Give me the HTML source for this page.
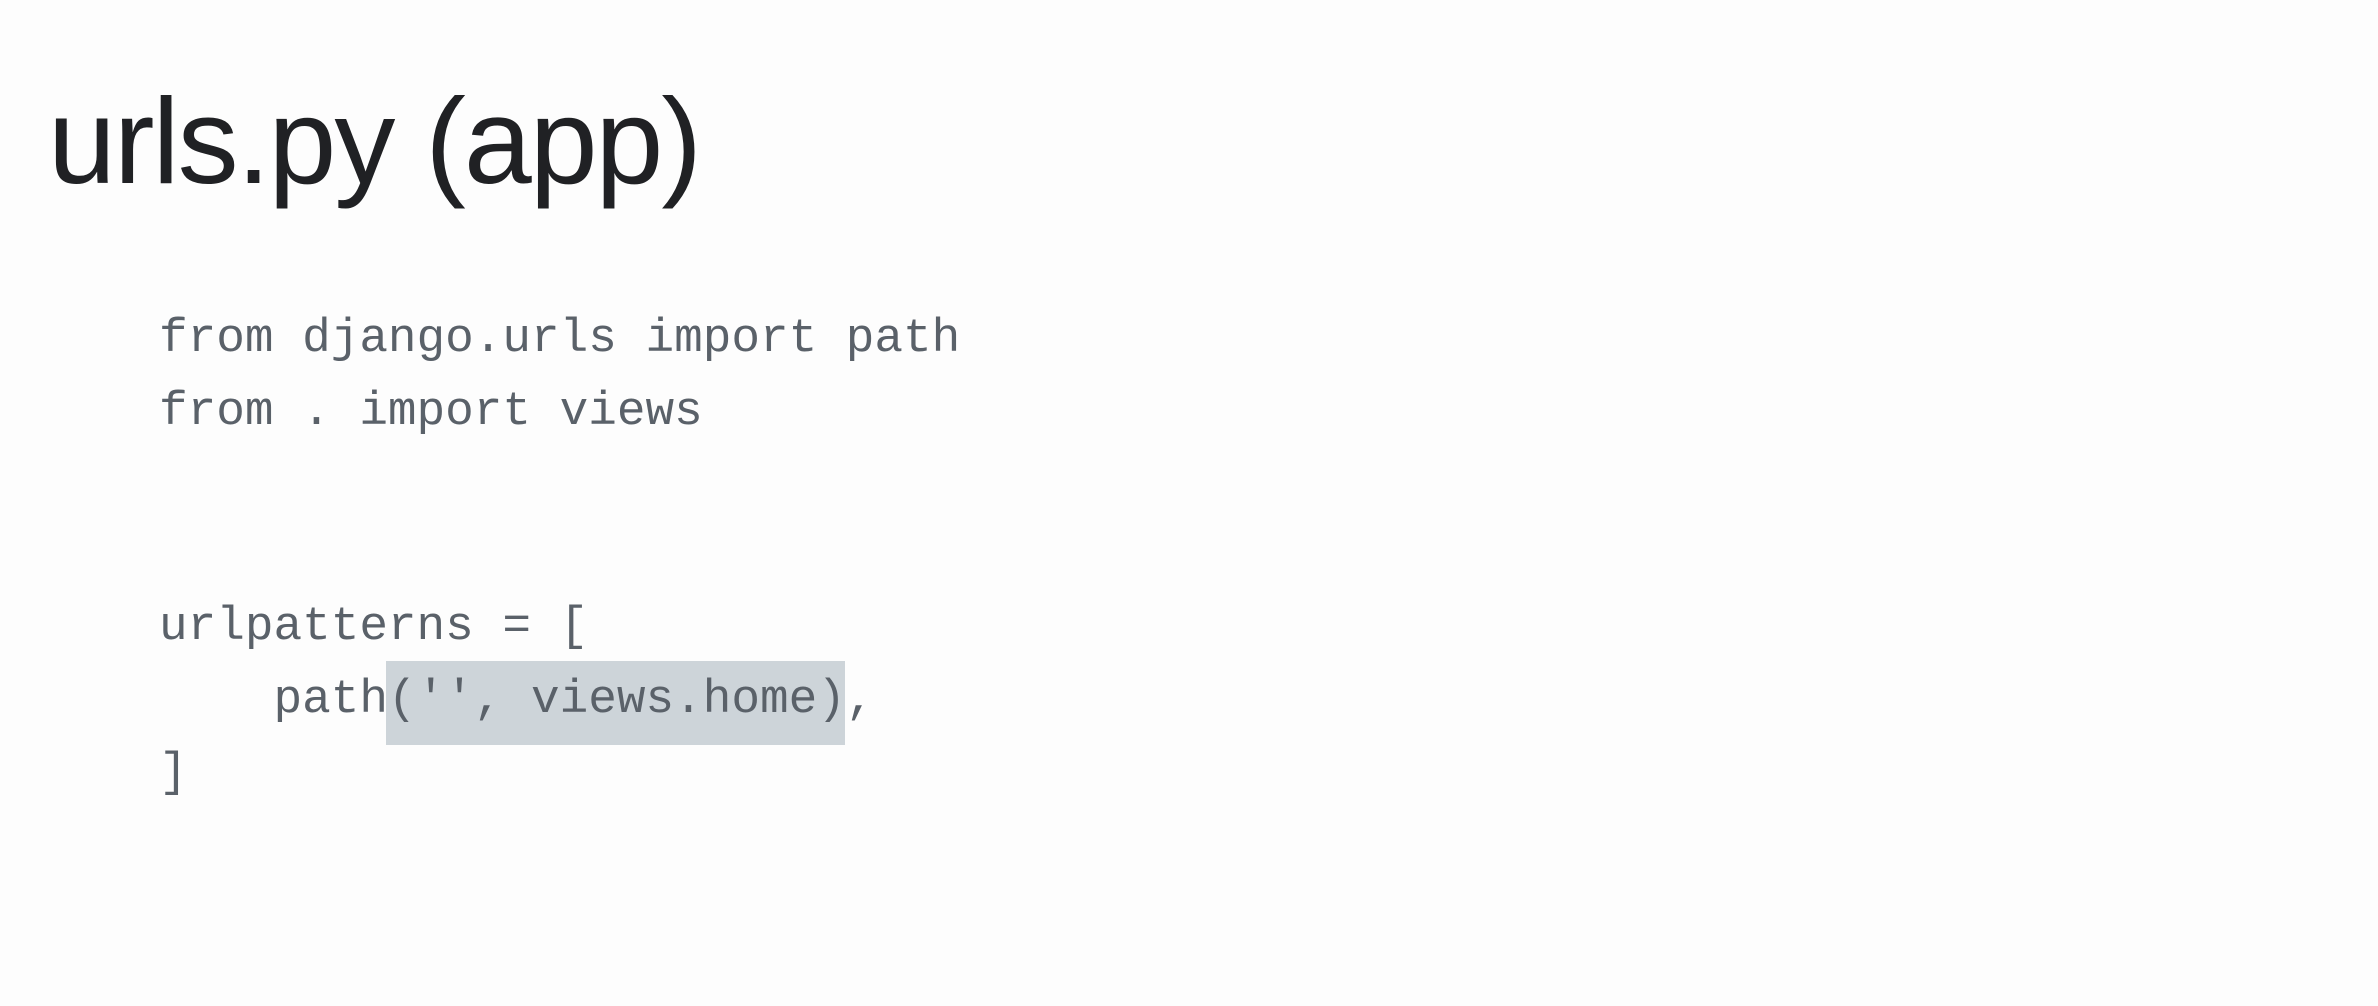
<!DOCTYPE html>
<html><head><meta charset="utf-8"><style>
html,body{margin:0;padding:0;width:2378px;height:1006px;background:#fdfdfd;overflow:hidden;position:relative}
.t{position:absolute;left:48px;top:80px;font:122px/1 "Liberation Sans",sans-serif;color:#202124;letter-spacing:-2px;white-space:nowrap}
.c{position:absolute;left:159px;font:47.7px/73px "Liberation Mono",monospace;color:#5a6169;white-space:pre}
.hl{position:absolute;left:386px;top:661px;width:459px;height:84px;background:#cdd4d9}
</style></head><body>
<div class="t">urls.py (app)</div>
<div class="hl"></div>
<div class="c" style="top:303px">from django.urls import path</div>
<div class="c" style="top:376px">from . import views</div>
<div class="c" style="top:591px">urlpatterns = [</div>
<div class="c" style="top:664px">    path('', views.home),</div>
<div class="c" style="top:737px">]</div>
</body></html>
